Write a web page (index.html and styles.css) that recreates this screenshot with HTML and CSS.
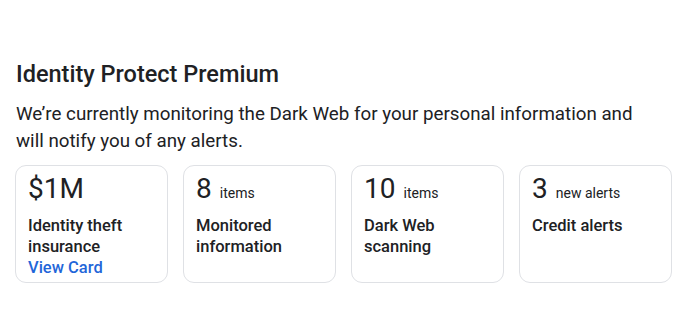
FILE: index.html
```html
<!DOCTYPE html>
<html lang="en">
<head>
<meta charset="utf-8">
<title>Identity Protect Premium</title>
<link rel="stylesheet" href="styles.css">
</head>
<body>
<section class="panel">
  <h2 class="title">Identity Protect Premium</h2>
  <p class="intro">We’re currently monitoring the Dark Web for your personal information and will notify you of any alerts.</p>
  <div class="cards">
    <div class="card">
      <div class="stat"><span class="num">$1M</span></div>
      <div class="label">Identity theft insurance</div>
      <a class="link" href="#">View Card</a>
    </div>
    <div class="card">
      <div class="stat"><span class="num">8</span><span class="unit">items</span></div>
      <div class="label">Monitored information</div>
    </div>
    <div class="card">
      <div class="stat"><span class="num">10</span><span class="unit">items</span></div>
      <div class="label">Dark Web scanning</div>
    </div>
    <div class="card">
      <div class="stat"><span class="num">3</span><span class="unit">new alerts</span></div>
      <div class="label">Credit alerts</div>
    </div>
  </div>
</section>
</body>
</html>
```

FILE: styles.css
```css
html, body {
  margin: 0;
  padding: 0;
  background: #ffffff;
}
body {
  font-family: Roboto, "Noto Sans", "Liberation Sans", sans-serif;
  color: #202124;
}
.panel {
  padding: 59px 28px 0 15px;
}
.title {
  margin: 0;
  padding-left: 1px;
  font-size: 23.5px;
  line-height: 30px;
  font-weight: 500;
  color: #202124;
}
.intro {
  margin: 12px 0 0;
  padding-left: 1px;
  font-size: 18.75px;
  line-height: 27px;
  font-weight: 400;
  max-width: 625px;
  color: #202124;
}
.cards {
  margin-top: 10px;
  display: grid;
  grid-template-columns: repeat(4, 1fr);
  gap: 15px;
}
.card {
  border: 1px solid #dfe1e5;
  border-radius: 11px;
  height: 108px;
  padding: 8px 12px 0 12px;
  display: flex;
  flex-direction: column;
}
.stat {
  display: flex;
  align-items: baseline;
  gap: 8px;
  height: 30px;
  line-height: 30px;
}
.num {
  font-size: 28px;
  font-weight: 400;
  color: #202124;
}
.unit {
  font-size: 14px;
  line-height: 16px;
  color: #202124;
}
.label {
  margin-top: 11px;
  font-size: 16.5px;
  line-height: 21px;
  font-weight: 500;
  color: #202124;
}
.link {
  font-size: 16.5px;
  line-height: 21px;
  font-weight: 500;
  color: #1f66d9;
  text-decoration: none;
}
```
